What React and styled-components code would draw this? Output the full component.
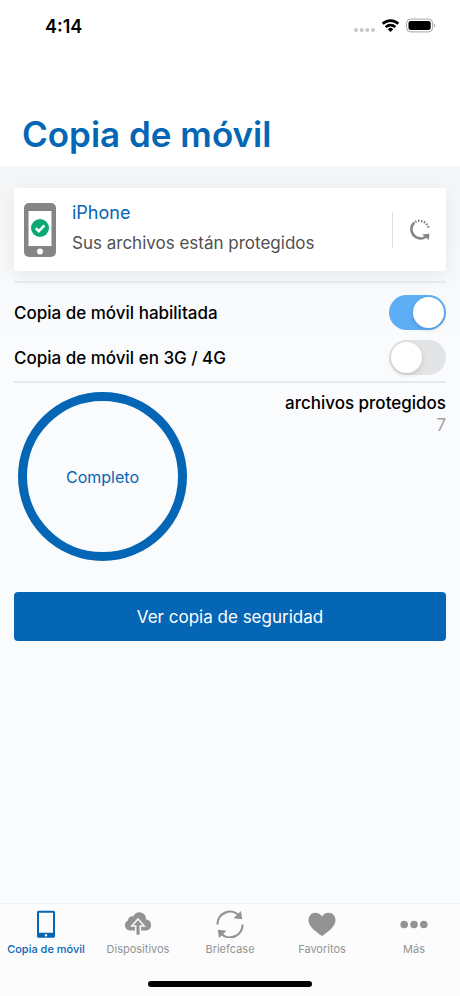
// App.jsx
import React, { useState } from "react";
import styled, { createGlobalStyle } from "styled-components";

const BLUE = "#0466b5";
const GRAY = "#939393";

const tabs = [
  { id: "movil", label: "Copia de móvil", Icon: PhoneIcon },
  { id: "dispositivos", label: "Dispositivos", Icon: CloudIcon },
  { id: "briefcase", label: "Briefcase", Icon: SyncIcon },
  { id: "favoritos", label: "Favoritos", Icon: HeartIcon },
  { id: "mas", label: "Más", Icon: MoreIcon },
];

function App() {
  const [enabled, setEnabled] = useState(true);
  const [mobileData, setMobileData] = useState(false);
  const [activeTab, setActiveTab] = useState("movil");

  return (
    <>
      <GlobalStyle />
      <Screen>
        <StatusBar>
          <Time>4:14</Time>
          <StatusIcons />
        </StatusBar>
        <Header>
          <Title>Copia de móvil</Title>
        </Header>

        <Content>
          <DeviceCard>
            <DeviceIcon />
            <DeviceInfo>
              <DeviceName>iPhone</DeviceName>
              <DeviceStatus>Sus archivos están protegidos</DeviceStatus>
            </DeviceInfo>
            <RefreshButton type="button" aria-label="Actualizar">
              <RefreshIcon />
            </RefreshButton>
          </DeviceCard>

          <Settings>
            <SettingRow>
              <label htmlFor="enabled">Copia de móvil habilitada</label>
              <Switch
                id="enabled"
                type="checkbox"
                checked={enabled}
                onChange={(e) => setEnabled(e.target.checked)}
              />
            </SettingRow>
            <SettingRow>
              <label htmlFor="mobileData">Copia de móvil en 3G / 4G</label>
              <Switch
                id="mobileData"
                type="checkbox"
                checked={mobileData}
                onChange={(e) => setMobileData(e.target.checked)}
              />
            </SettingRow>
          </Settings>

          <Summary>
            <Ring>Completo</Ring>
            <Counter>
              <CounterLabel>archivos protegidos</CounterLabel>
              <CounterValue>7</CounterValue>
            </Counter>
          </Summary>

          <BackupButton type="button">Ver copia de seguridad</BackupButton>
        </Content>

        <BottomBar>
          <Tabs>
            {tabs.map(({ id, label, Icon }) => (
              <Tab
                key={id}
                type="button"
                $active={id === activeTab}
                onClick={() => setActiveTab(id)}
              >
                <Icon />
                {label}
              </Tab>
            ))}
          </Tabs>
          <HomeIndicator />
        </BottomBar>
      </Screen>
    </>
  );
}

export default App;

function StatusIcons() {
  return (
    <svg width="84" height="16" viewBox="0 0 84 16" aria-hidden="true">
      <g fill="#c8c8c8">
        <circle cx="4" cy="12" r="2" />
        <circle cx="9.7" cy="12" r="2" />
        <circle cx="15.3" cy="12" r="2" />
        <circle cx="21" cy="12" r="2" />
      </g>
      <g fill="none" stroke="#000" strokeWidth="2.7">
        <path d="M30.700 5.800a11.100 11.100 0 0 1 15.600 0" />
        <path d="M33.700 9.100a6.800 6.800 0 0 1 9.600 0" />
      </g>
      <path d="M35.800 11.200a3.800 3.800 0 0 1 5.400 0L38.500 14z" />
      <rect x="54.600" y="1.100" width="26" height="12.800" rx="4" fill="none" stroke="#a5a5a5" />
      <rect x="56.500" y="3" width="22.200" height="9" rx="2.200" />
      <path d="M82 5.400c1.600.8 1.600 3.400 0 4.200z" fill="#a5a5a5" />
    </svg>
  );
}

function DeviceIcon() {
  return (
    <svg width="32" height="54" viewBox="0 0 32 54" aria-hidden="true">
      <rect width="32" height="54" rx="5" fill="#858585" />
      <rect x="4.500" y="8" width="23" height="35" fill="#fff" />
      <circle cx="16" cy="48.500" r="3" fill="#fff" />
      <circle cx="16" cy="25" r="9" fill="#0aaa72" />
      <path d="M11.800 25.200l3 2.900 5.600-5.700" fill="none" stroke="#fff" strokeWidth="2.600" />
    </svg>
  );
}

function RefreshIcon() {
  return (
    <svg width="24" height="24" viewBox="0 0 24 24" aria-hidden="true">
      <path d="M6.300 4.500A9.200 9.200 0 0 0 17.500 19" fill="none" stroke="#858585" strokeWidth="2.600" />
      <path
        d="M7.200 4A9.200 9.200 0 0 1 20.600 10"
        fill="none"
        stroke="#858585"
        strokeWidth="2.500"
        strokeDasharray="1.500 1.500"
      />
      <path d="M14.200 16.600l7.200-.8-.6 6.200z" fill="#858585" />
    </svg>
  );
}

function PhoneIcon() {
  return (
    <svg width="28" height="28" viewBox="0 0 28 28" aria-hidden="true">
      <path
        fill="currentColor"
        fillRule="evenodd"
        d="M6.500.800h15a1.500 1.500 0 0 1 1.500 1.500v24a1.500 1.500 0 0 1-1.500 1.500h-15a1.500 1.500 0 0 1-1.500-1.500v-24a1.500 1.500 0 0 1 1.500-1.500zM7 2.800v20h14v-20zM14 24a1.300 1.300 0 1 0 0 2.600 1.300 1.300 0 0 0 0-2.600z"
      />
    </svg>
  );
}

function CloudIcon() {
  return (
    <svg width="28" height="28" viewBox="0 0 28 28" aria-hidden="true">
      <path
        fill="currentColor"
        d="M5.500 20.500a5.200 5.200 0 0 1-1.500-9.900 4 4 0 0 1 5.100-4.100A6.700 6.700 0 0 1 22 9.600a5.500 5.500 0 0 1 .500 10.900z"
      />
      <path
        d="M14 9l6.200 7h-3.900v9.600h-4.600V16H7.800z"
        fill="currentColor"
        stroke="#fcfcfd"
        strokeWidth="1.500"
      />
    </svg>
  );
}

function SyncIcon() {
  return (
    <svg width="28" height="28" viewBox="0 0 28 28" aria-hidden="true">
      <g fill="none" stroke="currentColor" strokeWidth="2.200">
        <path d="M1.500 14.500A12.500 12.500 0 0 1 23 5.500" />
        <path d="M26.500 14.500A12.500 12.500 0 0 1 5 23.500" />
      </g>
      <path fill="currentColor" d="M25 1l1.200 8.200-8.700-.900zM3 28L1.800 19.800l8.700.900z" />
    </svg>
  );
}

function HeartIcon() {
  return (
    <svg width="28" height="28" viewBox="0 0 28 28" aria-hidden="true">
      <path
        fill="currentColor"
        d="M14 26C5.500 20.300.500 15.500.500 10 .500 5.800 3.500 2.700 7.400 2.700c2.800 0 5.300 1.300 6.600 3.900 1.300-2.600 3.800-3.900 6.600-3.900 3.900 0 6.900 3.100 6.900 7.300 0 5.500-5 10.300-13.500 16z"
      />
    </svg>
  );
}

function MoreIcon() {
  return (
    <svg width="28" height="28" viewBox="0 0 28 28" aria-hidden="true">
      <g fill="currentColor">
        <circle cx="4.200" cy="14.500" r="3.800" />
        <circle cx="14" cy="14.500" r="3.800" />
        <circle cx="23.800" cy="14.500" r="3.800" />
      </g>
    </svg>
  );
}

const GlobalStyle = createGlobalStyle`
  * {
    box-sizing: border-box;
  }

  body {
    margin: 0;
    background: #fafbfd;
    font-family: Inter, "Liberation Sans", sans-serif;
  }

  button {
    font-family: inherit;
    cursor: pointer;
  }
`;

const Screen = styled.div`
  display: flex;
  flex-direction: column;
  min-height: 100vh;
`;

const StatusBar = styled.div`
  display: flex;
  justify-content: space-between;
  align-items: center;
  height: 52px;
  padding: 0 24px 0 45px;
  background: #fff;
`;

const Time = styled.span`
  font-size: 18px;
  font-weight: 600;
`;

const Header = styled.header`
  padding: 59px 22px 9px;
  background: #fff;
`;

const Title = styled.h1`
  margin: 0;
  font-size: 35px;
  font-weight: 600;
  line-height: 46px;
  color: ${BLUE};
`;

const Content = styled.main`
  flex: 1;
  padding: 22px 14px;
  background: linear-gradient(#f5f6f8, #fafbfd 180px);
`;

const DeviceCard = styled.section`
  display: flex;
  align-items: center;
  height: 83px;
  padding-left: 10px;
  border-radius: 3px;
  background: #fff;
  box-shadow: 0 4px 20px rgba(0, 0, 0, 0.08);
`;

const DeviceInfo = styled.div`
  flex: 1;
  margin-left: 16px;
  padding-bottom: 4px;
`;

const DeviceName = styled.h2`
  margin: 0;
  font-size: 18px;
  font-weight: 400;
  line-height: 31px;
  color: ${BLUE};
`;

const DeviceStatus = styled.p`
  margin: 0;
  font-size: 17px;
  line-height: 31px;
  color: #505050;
`;

const RefreshButton = styled.button`
  display: flex;
  justify-content: center;
  align-items: center;
  width: 54px;
  height: 36px;
  padding: 0;
  border: none;
  border-left: 1px solid #dedede;
  background: none;
`;

const Settings = styled.section`
  margin-top: 10px;
  padding: 7px 0 1px;
  border-top: 2px solid #e8e9eb;
  border-bottom: 2px solid #e8e9eb;
`;

const SettingRow = styled.div`
  display: flex;
  justify-content: space-between;
  align-items: center;
  height: 45px;
  font-size: 17px;
  font-weight: 500;
`;

const Switch = styled.input`
  appearance: none;
  display: flex;
  justify-content: ${(props) => (props.checked ? "flex-end" : "flex-start")};
  width: 57px;
  height: 35px;
  margin: 0;
  padding: 2px;
  border-radius: 18px;
  background: ${(props) => (props.checked ? "#5eaef5" : "#e3e4e6")};
  cursor: pointer;

  &::before {
    content: "";
    width: 31px;
    height: 31px;
    border-radius: 50%;
    background: #fff;
    box-shadow: 0 2px 5px rgba(0, 0, 0, 0.15);
  }
`;

const Summary = styled.section`
  display: flex;
  justify-content: space-between;
  padding: 9px 0 0 4px;
`;

const Ring = styled.div`
  display: flex;
  justify-content: center;
  align-items: center;
  width: 169px;
  height: 169px;
  border: 9px solid ${BLUE};
  border-radius: 50%;
  font-size: 16px;
  color: ${BLUE};
`;

const Counter = styled.div`
  text-align: right;
  line-height: 22px;
`;

const CounterLabel = styled.div`
  font-size: 17px;
  font-weight: 500;
`;

const CounterValue = styled.div`
  font-size: 17px;
  color: #a2a3a5;
`;

const BackupButton = styled.button`
  width: 100%;
  height: 49px;
  margin-top: 31px;
  border: none;
  border-radius: 4px;
  font-size: 17px;
  color: #fff;
  background: ${BLUE};
`;

const BottomBar = styled.footer`
  display: flex;
  flex-direction: column;
  align-items: center;
  padding-bottom: 9px;
  border-top: 1px solid #f0f1f3;
  background: #fcfcfd;
`;

const Tabs = styled.nav`
  display: grid;
  grid-template-columns: repeat(5, 1fr);
  width: 100%;
  height: 77px;
`;

const Tab = styled.button`
  display: flex;
  flex-direction: column;
  align-items: center;
  gap: 4px;
  padding: 6px 0 0;
  border: none;
  background: none;
  font-size: 11px;
  font-weight: ${(props) => (props.$active ? 500 : 400)};
  line-height: 15px;
  white-space: nowrap;
  color: ${(props) => (props.$active ? BLUE : GRAY)};
`;

const HomeIndicator = styled.div`
  width: 164px;
  height: 6px;
  border-radius: 3px;
  background: #000;
`;
